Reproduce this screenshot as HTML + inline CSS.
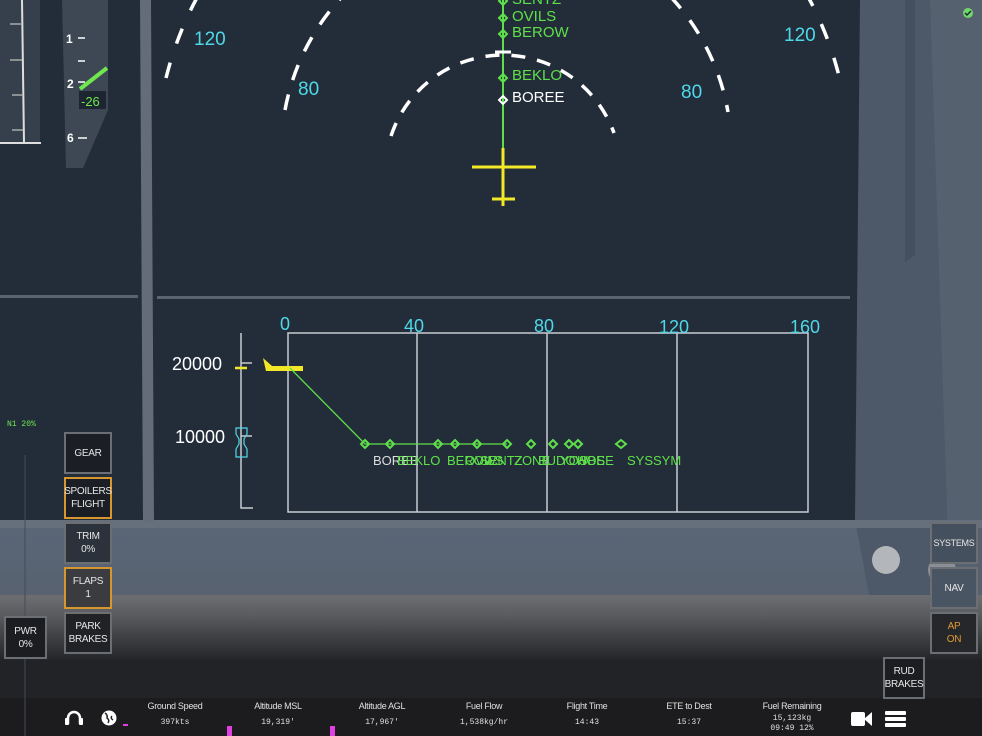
<!DOCTYPE html>
<html><head><meta charset="utf-8"><style>
html,body{margin:0;padding:0;width:982px;height:736px;overflow:hidden;background:#1e2733;font-family:"Liberation Sans",sans-serif}
svg{position:absolute;left:0;top:0}
.b{position:absolute;box-sizing:border-box;border:2px solid #6b6e73;background:#1b1e24;color:#e6e6e6;font-size:10px;line-height:13px;text-align:center;display:flex;align-items:center;justify-content:center;width:48px;height:43px;letter-spacing:-0.3px}
.o{border-color:#d8962e}
.lab{position:absolute;top:701px;color:#e0e0e0;font-size:9px;text-align:center;width:90px;letter-spacing:-0.3px}
.val{position:absolute;top:718px;color:#e0e0e0;font-size:8px;font-family:"Liberation Mono",monospace;text-align:center;width:90px}
</style></head><body>
<svg width="982" height="736" viewBox="0 0 982 736">
<defs>
<linearGradient id="bz" x1="0" y1="0" x2="0" y2="1"><stop offset="0" stop-color="#5a6677"/><stop offset="1" stop-color="#56606c"/></linearGradient>
<linearGradient id="lw" x1="0" y1="0" x2="0" y2="1"><stop offset="0" stop-color="#6c6e72"/><stop offset="0.3" stop-color="#5a5c60"/><stop offset="0.7" stop-color="#3a3c3f"/><stop offset="1" stop-color="#242528"/></linearGradient>
</defs>
<rect width="982" height="736" fill="#232d3a"/>
<!-- right bezel -->
<polygon points="860,0 982,0 982,620 840,600 855,520" fill="#4d5868"/>
<polygon points="930,0 982,0 982,620 950,600" fill="#56616f"/>
<polygon points="905,0 915,0 915,255 905,262" fill="#445060"/>
<!-- bottom bezel -->
<polygon points="0,520 855,520 870,600 982,610 982,640 0,640" fill="url(#bz)"/>
<rect x="0" y="520" width="982" height="8" fill="#66707d"/>
<rect x="0" y="595" width="982" height="65" fill="url(#lw)"/>
<rect x="0" y="660" width="982" height="40" fill="#222326"/>
<rect x="0" y="698" width="982" height="38" fill="#1c1c1e"/>
<!-- vertical bar -->
<polygon points="140,0 151,0 154,522 143,522" fill="#636c78"/>
<!-- horizontal line -->
<rect x="0" y="295" width="138" height="3" fill="#5a6470"/>
<rect x="157" y="296" width="693" height="3" fill="#5a6470"/>
<!-- left gauge -->
<rect x="0" y="0" width="40" height="143" fill="#35404c"/>
<line x1="22" y1="0" x2="24" y2="143" stroke="#ddd" stroke-width="2"/>
<line x1="0" y1="143" x2="41" y2="143" stroke="#ddd" stroke-width="2"/>
<g stroke="#aaa" stroke-width="1.5"><line x1="10" y1="24" x2="22" y2="24"/><line x1="10" y1="60" x2="22" y2="60"/><line x1="12" y1="95" x2="23" y2="95"/><line x1="12" y1="130" x2="23" y2="130"/></g>
<polygon points="62,0 108,0 108,110 83,168 66,168" fill="#3e4855"/>
<g fill="#fff" font-size="12" font-weight="bold"><text x="66" y="43">1</text><text x="67" y="88">2</text><text x="67" y="142">6</text></g>
<g stroke="#fff" stroke-width="1.5"><line x1="78" y1="38" x2="85" y2="38"/><line x1="78" y1="61" x2="85" y2="61"/><line x1="78" y1="82" x2="85" y2="82"/><line x1="78" y1="138" x2="87" y2="138"/></g>
<line x1="80" y1="89" x2="107" y2="68" stroke="#6ee84e" stroke-width="4"/>
<rect x="79" y="91" width="27" height="18" fill="#1c2530"/>
<text x="81" y="106" fill="#6ee84e" font-size="13">-26</text>
<!-- arcs -->
<g fill="none" stroke="#fff" stroke-width="3.5">
<path d="M391,136 A118,118 0 0 1 614,133" stroke-dasharray="14,12"/>
<path d="M285,110 A225,225 0 0 1 728,112" stroke-dasharray="16,15"/>
<path d="M166,78 A347,347 0 0 1 840,80" stroke-dasharray="16,20"/>
</g>
<g fill="#4fd8e8" font-size="19"><text x="194" y="45">120</text><text x="784" y="41">120</text><text x="298" y="95">80</text><text x="681" y="98">80</text></g>
<!-- route -->
<line x1="503" y1="0" x2="503" y2="148" stroke="#5fe04a" stroke-width="2"/>
<line x1="495" y1="52" x2="511" y2="52" stroke="#fff" stroke-width="3"/>
<g fill="none" stroke="#5fe04a" stroke-width="2"><path d="M503,-3 l4,4 -4,4 -4,-4z"/><path d="M503,14 l4,4 -4,4 -4,-4z"/><path d="M503,30 l4,4 -4,4 -4,-4z"/><path d="M503,74 l4,4 -4,4 -4,-4z"/></g>
<path d="M503,96 l4,4 -4,4 -4,-4z" fill="none" stroke="#fff" stroke-width="2"/>
<g fill="#5fe04a" font-size="15"><text x="512" y="4">SENTZ</text><text x="512" y="21">OVILS</text><text x="512" y="37">BEROW</text><text x="512" y="80">BEKLO</text></g>
<text x="512" y="102" fill="#fff" font-size="15">BOREE</text>
<g stroke="#f2e828" stroke-width="3"><line x1="472" y1="167" x2="536" y2="167"/><line x1="503" y1="148" x2="503" y2="206"/><line x1="492" y1="199" x2="515" y2="199"/></g>
<!-- vertical profile -->
<g fill="none" stroke="#c8ccd2" stroke-width="1.5">
<rect x="288" y="333" width="520" height="179"/>
<line x1="417" y1="333" x2="417" y2="512"/><line x1="547" y1="333" x2="547" y2="512"/><line x1="677" y1="333" x2="677" y2="512"/>
<polyline points="241,333 241,508 253,508"/>
<line x1="241" y1="363" x2="252" y2="363"/><line x1="241" y1="436" x2="252" y2="436"/>
</g>
<g fill="#4fd8e8" font-size="18"><text x="280" y="330">0</text><text x="404" y="332">40</text><text x="534" y="332">80</text><text x="659" y="333">120</text><text x="790" y="333">160</text></g>
<g fill="#fff" font-size="18"><text x="172" y="370">20000</text><text x="175" y="443">10000</text></g>
<line x1="235" y1="368" x2="247" y2="368" stroke="#f2e828" stroke-width="2.5"/>
<polygon points="263,358 272,366 303,366 303,371 266,371" fill="#f2e828"/>
<path d="M236,428 h11 v6 l-3,5 v5 l3,5 v8 h-11 v-8 l3,-5 v-5 l-3,-5z" fill="none" stroke="#4fd8e8" stroke-width="1.2"/>
<polyline points="290,368 365,444 507,444" fill="none" stroke="#5fe04a" stroke-width="1.3"/>
<g fill="none" stroke="#5fe04a" stroke-width="2">
<path d="M365,440 l4,4 -4,4 -4,-4z"/><path d="M390,440 l4,4 -4,4 -4,-4z"/><path d="M438,440 l4,4 -4,4 -4,-4z"/><path d="M455,440 l4,4 -4,4 -4,-4z"/><path d="M477,440 l4,4 -4,4 -4,-4z"/><path d="M507,440 l4,4 -4,4 -4,-4z"/><path d="M531,440 l4,4 -4,4 -4,-4z"/><path d="M553,440 l4,4 -4,4 -4,-4z"/><path d="M569,440 l4,4 -4,4 -4,-4z"/><path d="M578,440 l4,4 -4,4 -4,-4z"/><path d="M621,440 l5,4 -5,4 -5,-4z"/></g>
<text x="373" y="465" fill="#ddd" font-size="13">BOREE</text>
<g fill="#5fe04a" font-size="13"><text x="397" y="465">BEKLO</text><text x="447" y="465">BEROW</text><text x="465" y="465">OVILS</text><text x="480" y="465">SENTZ</text><text x="514" y="465">ZONE</text><text x="538" y="465">BUDOW</text><text x="560" y="465">YOSBE</text><text x="577" y="465">HOSE</text><text x="627" y="465">SYSSYM</text></g>
<text x="7" y="426" fill="#6ee84e" font-size="8" font-family="Liberation Mono,monospace">N1  20%</text>
<line x1="25" y1="455" x2="25" y2="736" stroke="#444b55" stroke-width="1"/>
<circle cx="886" cy="560" r="14" fill="#b3b6ba"/>
<circle cx="942" cy="570" r="14" fill="#9a9ea3" opacity="0.8"/>
<circle cx="968" cy="13" r="5" fill="#6ed86a"/>
<path d="M965,13 l2,2 4,-4" stroke="#1e2733" stroke-width="1.5" fill="none"/>
<!-- bottom icons -->
<path d="M68,724 v-6 a6,6 0 0 1 12,0 v6" fill="none" stroke="#fff" stroke-width="2.5"/>
<rect x="65" y="718" width="4" height="7" rx="1" fill="#fff"/><rect x="79" y="718" width="4" height="7" rx="1" fill="#fff"/>
<circle cx="109" cy="718" r="7.5" fill="#fff"/><path d="M105,713 q3,2 2,5 q3,2 1,5 M112,716 q-2,2 1,4" stroke="#222" stroke-width="1.5" fill="none"/>
<rect x="123" y="724" width="5" height="2" fill="#e040e0"/>
<rect x="227" y="726" width="5" height="10" fill="#e040e0"/>
<rect x="330" y="726" width="5" height="10" fill="#e040e0"/>
<rect x="851" y="712" width="14" height="14" rx="2" fill="#fff"/><polygon points="864,719 872,712 872,726" fill="#fff"/>
<g fill="#fff"><rect x="885" y="711" width="21" height="4" rx="1"/><rect x="885" y="717" width="21" height="4" rx="1"/><rect x="885" y="723" width="21" height="4" rx="1"/></g>
</svg>
<div class="b" style="left:64px;top:432px;height:42px">GEAR</div>
<div class="b o" style="left:64px;top:477px;height:42px">SPOILERS<br>FLIGHT</div>
<div class="b" style="left:64px;top:522px;height:42px;background:#2c323b">TRIM<br>0%</div>
<div class="b o" style="left:64px;top:567px;height:42px;background:#3a3c40">FLAPS<br>1</div>
<div class="b" style="left:64px;top:612px;height:42px;background:#202226">PARK<br>BRAKES</div>
<div class="b" style="left:4px;top:616px;height:43px;width:43px;background:#1c1d20">PWR<br>0%</div>
<div class="b" style="left:930px;top:522px;height:42px;background:#45505e;font-size:9px">SYSTEMS</div>
<div class="b" style="left:930px;top:567px;height:42px;background:#4a5563">NAV</div>
<div class="b" style="left:930px;top:612px;height:42px;color:#e09a30;background:#25272a">AP<br>ON</div>
<div class="b" style="left:883px;top:657px;height:42px;width:42px;background:#1c1d20">RUD<br>BRAKES</div>
<div class="lab" style="left:130px">Ground Speed</div><div class="val" style="left:130px">397kts</div>
<div class="lab" style="left:233px">Altitude MSL</div><div class="val" style="left:233px">19,319'</div>
<div class="lab" style="left:337px">Altitude AGL</div><div class="val" style="left:337px">17,967'</div>
<div class="lab" style="left:439px">Fuel Flow</div><div class="val" style="left:439px">1,538kg/hr</div>
<div class="lab" style="left:542px">Flight Time</div><div class="val" style="left:542px">14:43</div>
<div class="lab" style="left:644px">ETE to Dest</div><div class="val" style="left:644px">15:37</div>
<div class="lab" style="left:747px">Fuel Remaining</div><div class="val" style="left:747px;top:714px;line-height:10px">15,123kg<br>09:49 12%</div>
</body></html>
